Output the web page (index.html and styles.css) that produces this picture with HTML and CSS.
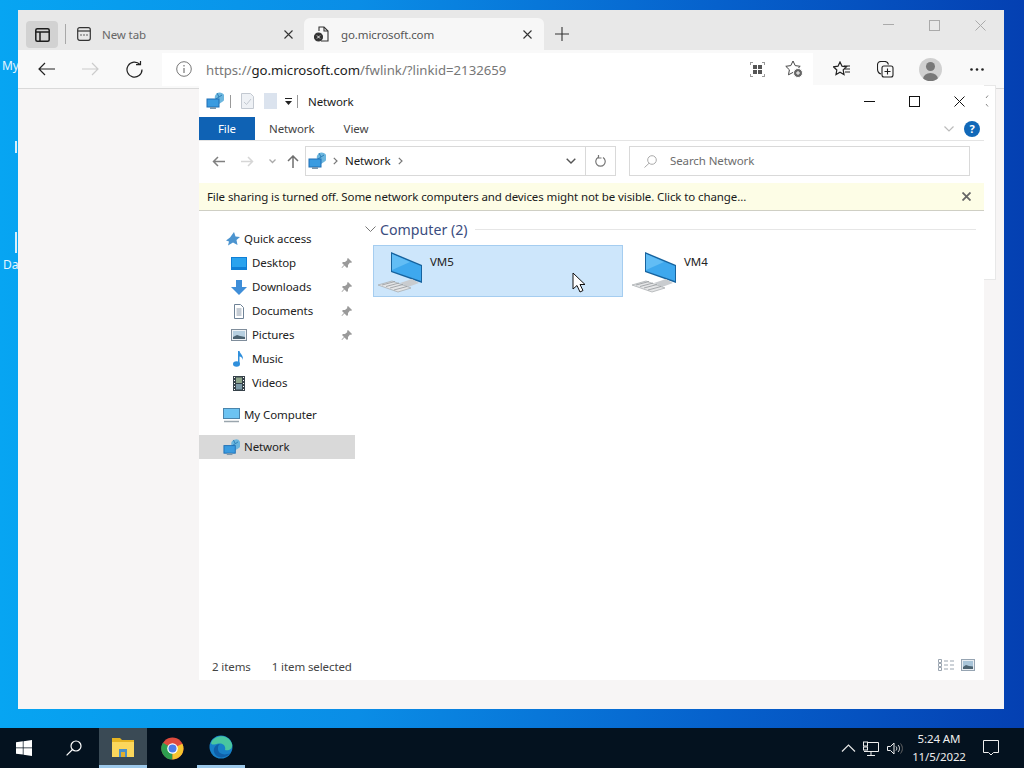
FILE: index.html
```html
<!DOCTYPE html>
<html lang="en">
<head>
    <meta charset="UTF-8">
    <title>Network</title>
    <link rel="stylesheet" href="styles.css">
</head>
<body>
    <svg class="defs" width="0" height="0">
        <symbol id="net" viewBox="0 0 18 18">
            <path d="M9 7a5 5 0 1 1 7 3l-3 2V7z" fill="#6cb6de"/>
            <path d="M11 1l2 4-3 2M16 3l-3 2" fill="none" stroke="#2c7fb8"/>
            <rect x="1" y="7" width="12" height="8" fill="#3a9be0" stroke="#1f6fb5"/>
            <rect x="4" y="15" width="6" height="2" fill="#7c97ad"/>
        </symbol>
        <symbol id="pc" viewBox="0 0 44 41">
            <path d="M13 0l31 13v18L13 20z" fill="#17639e"/>
            <path d="M14 2l29 12v15L14 19z" fill="#3ea8ee"/>
            <path d="M14 2l18 8-18 8z" fill="#62bdf5"/>
            <path d="M22 31l12-4 7 4-11 4z" fill="#c9cccf"/>
            <path d="M0 33l14-4 19 7-13 4z" fill="#e4e5e6" stroke="#a3a7ab" stroke-width=".7"/>
            <path d="M4 33l13-3.500M8 34.500l13-3.500M12 36l13-3.500M16 38l13-3.500" stroke="#94989c" stroke-width=".8"/>
        </symbol>
        <symbol id="pin" viewBox="0 0 12 12">
            <path d="M7 1l4 4-1 1-1-.4L7 8v2L6 11 3.500 8.500 1 11l-.5-.5L3 8 1 6l1-1h2l2.400-2L6 2z" fill="#9a9a9a"/>
        </symbol>
    </svg>

    <div class="desk-label label-my">My</div>
    <div class="desk-label label-mark mark-a"></div>
    <div class="desk-label label-mark mark-b"></div>
    <div class="desk-label label-da">Da</div>

    <!-- browser -->
    <div class="browser">
        <div class="tabstrip">
            <div class="tab-actions">
                <svg width="15" height="14" viewBox="0 0 15 14" fill="none" stroke="#1c1c1c" stroke-width="1.500"><rect x=".8" y=".8" width="13.400" height="12.400" rx="1.500"/><path d="M.8 4h13.400M5 4v9" /></svg>
            </div>
            <div class="tab-sep"></div>
            <div class="tab">
                <svg width="14" height="14" viewBox="0 0 14 14" fill="none" stroke="#333" stroke-width="1.200"><rect x=".7" y=".7" width="12.600" height="12.600" rx="2"/><path d="M.7 4h12.600"/><path d="M3.500 8h1M6.500 8h1M9.500 8h1" stroke-width="1.500"/></svg>
                <span class="tab-title">New tab</span>
                <svg class="tab-x" width="9" height="9" viewBox="0 0 9 9" stroke="#333" stroke-width="1.100"><path d="M.5.500l8 8M8.500.500l-8 8"/></svg>
            </div>
            <div class="tab tab-on">
                <svg width="15" height="16" viewBox="0 0 15 16" fill="none" stroke="#333" stroke-width="1.100"><path d="M5 5V1h5l4 4v10H7"/><path d="M10 1v4h4"/><circle cx="4.500" cy="11" r="4" fill="#333"/><path d="M3 9.500l3 3M6 9.500l-3 3" stroke="#fff" stroke-width=".9"/></svg>
                <span class="tab-title">go.microsoft.com</span>
                <svg class="tab-x" width="9" height="9" viewBox="0 0 9 9" stroke="#333" stroke-width="1.100"><path d="M.5.500l8 8M8.500.500l-8 8"/></svg>
            </div>
            <svg class="tab-new" width="14" height="14" viewBox="0 0 14 14" stroke="#333" stroke-width="1.100"><path d="M7 0v14M0 7h14"/></svg>
            <div class="win-btns">
                <svg width="11" height="11" viewBox="0 0 11 11" stroke="#aaa"><path d="M0 4.500h11"/></svg>
                <svg width="11" height="11" viewBox="0 0 11 11" fill="none" stroke="#aaa"><rect x=".5" y=".5" width="10" height="10"/></svg>
                <svg width="11" height="11" viewBox="0 0 11 11" stroke="#aaa"><path d="M.5.500l10 10M10.500.500l-10 10"/></svg>
            </div>
        </div>
        <div class="toolbar">
            <svg class="tb-back" width="17" height="14" viewBox="0 0 17 14" fill="none" stroke="#222" stroke-width="1.200"><path d="M17 7H1M7 1L1 7l6 6"/></svg>
            <svg class="tb-fwd" width="17" height="14" viewBox="0 0 17 14" fill="none" stroke="#ccc" stroke-width="1.200"><path d="M0 7h16M10 1l6 6-6 6"/></svg>
            <svg class="tb-reload" width="17" height="17" viewBox="0 0 17 17" fill="none" stroke="#222" stroke-width="1.200"><path d="M14 3.500A7.500 7.500 0 1 0 16 8.500"/><path d="M10 3.700h4.500V0"/></svg>
            <div class="urlbar">
                <svg width="16" height="16" viewBox="0 0 16 16" fill="none" stroke="#777"><circle cx="8" cy="8" r="7.300"/><path d="M8 7v5M8 4v1.500" stroke-width="1.200"/></svg>
                <span class="url"><span class="url-dim">https://</span>go.microsoft.com<span class="url-dim">/fwlink/?linkid=2132659</span></span>
                <svg class="url-grid" width="15" height="15" viewBox="0 0 15 15" fill="#555"><path d="M0 0h3v1H1v2H0zM12 0h3v3h-1V1h-2zM0 12h1v2h2v1H0zM14 12h1v3h-3v-1h2z" fill="#999"/><rect x="3" y="3" width="4" height="4"/><rect x="8" y="3" width="4" height="4"/><rect x="3" y="8" width="4" height="4"/><rect x="8" y="8" width="4" height="4"/></svg>
                <svg class="url-star" width="18" height="18" viewBox="0 0 18 18" fill="none" stroke="#444"><path d="M8 1l2.200 4.600 5 .7-3.600 3.500.9 5-4.500-2.400-4.500 2.400.9-5L.8 6.300l5-.7z"/><circle cx="13" cy="13" r="4.500" fill="#666" stroke="#fff"/><path d="M13 11v4M11 13h4" stroke="#fff"/></svg>
            </div>
            <svg class="tb-fav" width="17" height="16" viewBox="0 0 17 16" fill="none" stroke="#222" stroke-width="1.200"><path d="M7 1l2 4.200 4.500.6-3.300 3.200.8 4.500-4-2.200-4 2.200.8-4.500L.5 5.800 5 5.200z"/><path d="M11 5h6M12 8h5M12 11h5"/></svg>
            <svg class="tb-coll" width="17" height="17" viewBox="0 0 17 17" fill="none" stroke="#222" stroke-width="1.100"><path d="M4 13C1 12 .5 10 .5 8V4C.5 2 2 .5 4 .5h4c2 0 3 1 3.500 3"/><rect x="5" y="5" width="11" height="11" rx="2"/><path d="M10.500 7.500v6M7.500 10.500h6"/></svg>
            <div class="avatar"><div class="avatar-head"></div><div class="avatar-body"></div></div>
            <svg class="tb-more" width="14" height="3" viewBox="0 0 14 3" fill="#222"><circle cx="1.500" cy="1.500" r="1.300"/><circle cx="7" cy="1.500" r="1.300"/><circle cx="12.500" cy="1.500" r="1.300"/></svg>
        </div>
        <div class="browser-body"></div>
    </div>

    <!-- window sitting behind explorer -->
    <div class="back-window">
        <svg class="back-mark" width="4" height="12" viewBox="0 0 4 12" fill="none" stroke="#888"><path d="M3 .5L1 3M1 9l2 2.500"/></svg>
    </div>

    <!-- explorer -->
    <div class="explorer">
        <div class="titlebar">
            <svg class="qa-net" width="18" height="18"><use href="#net"/></svg>
            <div class="qa-sep"></div>
            <svg width="13" height="16" viewBox="0 0 13 16" fill="#eef1f5" stroke="#c3c9d1"><path d="M.5.500h9l3 3v12H.5z"/><path d="M3 9l2.500 2.500L10 6" fill="none"/></svg>
            <svg class="qa-doc" width="13" height="16" viewBox="0 0 13 16"><rect width="13" height="16" fill="#dbe3ee"/></svg>
            <svg class="qa-drop" width="7" height="7" viewBox="0 0 7 7" fill="#222"><path d="M0 0h7v1H0zM0 3h7L3.500 7z"/></svg>
            <div class="qa-sep qa-sep-b"></div>
            <span class="title-text">Network</span>
            <div class="ex-btns">
                <svg width="11" height="11" viewBox="0 0 11 11" stroke="#111"><path d="M0 5.500h11"/></svg>
                <svg width="11" height="11" viewBox="0 0 11 11" fill="none" stroke="#111"><rect x=".5" y=".5" width="10" height="10"/></svg>
                <svg width="11" height="11" viewBox="0 0 11 11" stroke="#111"><path d="M.5.500l10 10M10.500.500l-10 10"/></svg>
            </div>
        </div>
        <div class="ribbon">
            <div class="rib-file">File</div>
            <div class="rib-tab">Network</div>
            <div class="rib-tab">View</div>
            <svg class="rib-chev" width="10" height="6" viewBox="0 0 10 6" fill="none" stroke="#bbb" stroke-width="1.200"><path d="M.5.500L5 5 9.500.5"/></svg>
            <div class="help">?</div>
        </div>
        <div class="navrow">
            <svg class="nav-back" width="13" height="11" viewBox="0 0 13 11" fill="none" stroke="#808080" stroke-width="1.500"><path d="M13 5.500H1.500M6 1L1.500 5.500 6 10"/></svg>
            <svg class="nav-fwd" width="13" height="11" viewBox="0 0 13 11" fill="none" stroke="#d6d6d6" stroke-width="1.500"><path d="M0 5.500h11.500M7 1l4.500 4.500L7 10"/></svg>
            <svg class="nav-drop" width="7" height="5" viewBox="0 0 7 5" fill="none" stroke="#aaa" stroke-width="1.300"><path d="M.5.500l3 3 3-3"/></svg>
            <svg class="nav-up" width="12" height="13" viewBox="0 0 12 13" fill="none" stroke="#6f6f6f" stroke-width="1.500"><path d="M6 13V1.500M1 6l5-5 5 5"/></svg>
            <div class="addr">
                <svg width="18" height="18"><use href="#net"/></svg>
                <svg class="crumb" width="5" height="8" viewBox="0 0 5 8" fill="none" stroke="#777" stroke-width="1.200"><path d="M.8.800L4 4 .8 7.200"/></svg>
                <span class="addr-text">Network</span>
                <svg class="crumb" width="5" height="8" viewBox="0 0 5 8" fill="none" stroke="#777" stroke-width="1.200"><path d="M.8.800L4 4 .8 7.200"/></svg>
                <svg class="addr-drop" width="10" height="6" viewBox="0 0 10 6" fill="none" stroke="#555" stroke-width="1.400"><path d="M.7.700L5 5 9.300.7"/></svg>
                <div class="addr-reload">
                    <svg width="11" height="12" viewBox="0 0 11 12" fill="none" stroke="#777" stroke-width="1.200"><path d="M3 2.500A4.700 4.700 0 1 0 8 2.500"/><path d="M3.500 0v3H6.500" /></svg>
                </div>
            </div>
            <div class="search">
                <svg width="13" height="13" viewBox="0 0 13 13" fill="none" stroke="#aaa"><circle cx="8" cy="5" r="4.300"/><path d="M5 8.300L.5 12.500"/></svg>
                <span>Search Network</span>
            </div>
        </div>
        <div class="infobar">
            <span>File sharing is turned off. Some network computers and devices might not be visible. Click to change...</span>
            <svg width="9" height="9" viewBox="0 0 9 9" stroke="#666" stroke-width="1.800"><path d="M.5.500l8 8M8.500.500l-8 8"/></svg>
        </div>
        <div class="main">
            <div class="sidebar">
                <div class="side-item side-top side-quick">
                    <svg width="14" height="14" viewBox="0 0 14 14" fill="#4c94cf"><path d="M8 0l1.500 4.500L14 5l-3.500 3 1 5L7 10.500 2 13.500l1-4-3-1 4-3z"/></svg>
                    <span>Quick access</span>
                </div>
                <div class="side-item side-sub">
                    <svg width="16" height="13" viewBox="0 0 16 13"><rect width="16" height="13" fill="#0f7fd6"/><rect x="1" y="1" width="14" height="9" fill="#2aa3ee"/></svg>
                    <span>Desktop</span>
                    <svg class="pin" width="12" height="12"><use href="#pin"/></svg>
                </div>
                <div class="side-item side-sub">
                    <svg width="16" height="15" viewBox="0 0 16 15" fill="#3f8ed8"><path d="M5 0h6v7h5l-8 8-8-8h5z"/></svg>
                    <span>Downloads</span>
                    <svg class="pin" width="12" height="12"><use href="#pin"/></svg>
                </div>
                <div class="side-item side-sub">
                    <svg width="16" height="15" viewBox="0 0 16 15" fill="#fff" stroke="#6e8296"><path d="M3.500.500h6l3 3v11h-9z"/><path d="M5.500 5h5M5.500 7h5M5.500 9h5M5.500 11h5" stroke-width=".8"/></svg>
                    <span>Documents</span>
                    <svg class="pin" width="12" height="12"><use href="#pin"/></svg>
                </div>
                <div class="side-item side-sub">
                    <svg width="16" height="12" viewBox="0 0 16 12"><rect x=".5" y=".5" width="15" height="11" fill="#eef2f5" stroke="#7f8d9b"/><rect x="2" y="2" width="12" height="8" fill="#b6cfe0"/><path d="M2 8l4-2 3 1 5 1v2H2z" fill="#4b6270"/></svg>
                    <span>Pictures</span>
                    <svg class="pin" width="12" height="12"><use href="#pin"/></svg>
                </div>
                <div class="side-item side-sub">
                    <svg width="16" height="16" viewBox="0 0 16 16" fill="#2f8fdc"><ellipse cx="5.500" cy="13" rx="3.500" ry="2.700"/><path d="M7 0h1.500c.5 3 4 4 3.500 9-.5-2-2-3.500-3.500-3.500V13H7z"/></svg>
                    <span>Music</span>
                </div>
                <div class="side-item side-sub">
                    <svg width="16" height="15" viewBox="0 0 16 15"><rect x="2" width="12" height="15" fill="#37424a"/><rect x="5" y="1.500" width="6" height="5.500" fill="#8fa68c"/><rect x="5" y="8" width="6" height="5.500" fill="#7d9aa8"/><path d="M3 1h1v1H3zM3 4h1v1H3zM3 7h1v1H3zM3 10h1v1H3zM3 13h1v1H3zM12 1h1v1h-1zM12 4h1v1h-1zM12 7h1v1h-1zM12 10h1v1h-1zM12 13h1v1h-1z" fill="#fff"/></svg>
                    <span>Videos</span>
                </div>
                <div class="side-item side-top side-gap">
                    <svg width="17" height="15" viewBox="0 0 17 15"><rect x=".5" y=".5" width="16" height="10" fill="#6cc3f2" stroke="#4a84ab"/><path d="M1 13.500h15" stroke="#9aa5ad" stroke-width="1.500"/></svg>
                    <span>My Computer</span>
                </div>
                <div class="side-item side-top side-net">
                    <svg width="17" height="17"><use href="#net"/></svg>
                    <span>Network</span>
                </div>
            </div>
            <div class="content">
                <div class="group-head">
                    <svg width="11" height="7" viewBox="0 0 11 7" fill="none" stroke="#777"><path d="M.5.500l5 5 5-5"/></svg>
                    <span>Computer (2)</span>
                    <div class="group-line"></div>
                </div>
                <div class="items">
                    <div class="item item-on">
                        <svg width="44" height="41"><use href="#pc"/></svg>
                        <span>VM5</span>
                        <svg class="cursor" width="14" height="21" viewBox="0 0 14 21"><path d="M1 1v16l4-3.500L8 20l3-1.500-3-6h5z" fill="#fff" stroke="#111"/></svg>
                    </div>
                    <div class="item">
                        <svg width="44" height="41"><use href="#pc"/></svg>
                        <span>VM4</span>
                    </div>
                </div>
            </div>
        </div>
        <div class="statusbar">
            <span>2 items</span>
            <span>1 item selected</span>
            <div class="st-views">
                <svg width="16" height="12" viewBox="0 0 16 12" fill="none" stroke="#9aa5b0"><path d="M.5.500h3v3h-3zM.5 4.500h3v3h-3zM.5 8.500h3v3h-3zM6 2h4M12 2h4M6 6h4M12 6h4M6 10h4M12 10h4"/></svg>
                <svg width="14" height="12" viewBox="0 0 14 12"><rect x=".5" y=".5" width="13" height="11" fill="#e8edf2" stroke="#96a4b2"/><rect x="2" y="2" width="10" height="8" fill="#a8c4d8"/><path d="M2 8l3-2 3 1 4 .5V10H2z" fill="#4b6270"/></svg>
            </div>
        </div>
    </div>

    <!-- taskbar -->
    <div class="taskbar">
        <div class="tb-start">
            <svg width="16" height="16" viewBox="0 0 16 16" fill="#fff"><path d="M0 2.300l6.800-1V7.500H0zM7.500 1.200L16 0v7.500H7.500zM0 8.300h6.800v6.300L0 13.700zM7.500 8.300H16V16l-8.500-1.200z"/></svg>
        </div>
        <div class="tb-search">
            <svg width="16" height="16" viewBox="0 0 16 16" fill="none" stroke="#fff" stroke-width="1.200"><circle cx="10" cy="6" r="5"/><path d="M6.500 9.500L.6 15.400"/></svg>
        </div>
        <div class="tb-app tb-app-on">
            <svg width="24" height="20" viewBox="0 0 24 20"><path d="M1 1h8l2 2h12v4H1z" fill="#e6b422"/><rect x="1" y="5" width="22" height="15" fill="#fbd75c"/><rect x="8" y="12" width="8" height="8" fill="#4a90c8"/><rect x="10" y="15" width="4" height="5" fill="#e0b030"/></svg>
        </div>
        <div class="tb-app">
            <svg width="23" height="23" viewBox="0 0 24 24"><circle cx="12" cy="12" r="11.500" fill="#dd4b3e"/><path d="M12 12L2 6A11.500 11.500 0 0 0 12 23.500z" fill="#2e9e4f"/><path d="M12 12l10.300-5A11.500 11.500 0 0 1 12 23.500z" fill="#f7c52e"/><circle cx="12" cy="12" r="5.500" fill="#fff"/><circle cx="12" cy="12" r="4.200" fill="#4a7de8"/></svg>
        </div>
        <div class="tb-app tb-app-open">
            <svg width="24" height="24" viewBox="0 0 24 24"><circle cx="12" cy="12" r="11.500" fill="#1780c8"/><path d="M2 8C5 0 19-2 23 9c1 5-3 7-7 6 1-3-1-7-6-6.500C6 9 3 11 2 8z" fill="#49c6a0"/><path d="M9 14c0 5 7 7 12 4-4 6-14 6-16-1-1-4 2-8 6-8-2 1-2 3-2 5z" fill="#0f5fa8"/></svg>
        </div>
        <div class="tray">
            <svg width="15" height="8" viewBox="0 0 15 8" fill="none" stroke="#e6e6e6" stroke-width="1.200"><path d="M1 7.500l6.500-6.500L14 7.500"/></svg>
            <svg class="tray-net" width="16" height="15" viewBox="0 0 16 15" fill="none" stroke="#eee"><path d="M3 1.500h12.500v9H1M8 11v3M4 14.500h8"/><rect x=".5" y="1" width="4" height="4" fill="#04121f"/><rect x=".5" y="6" width="4" height="3" fill="#04121f"/></svg>
            <svg class="tray-vol" width="17" height="13" viewBox="0 0 17 13" fill="none" stroke="#eee"><path d="M.5 4.500h3L7 1v11L3.500 8.500h-3z"/><path d="M9 4.500c1 1 1 3 0 4M11 3c2 2 2 5 0 7"/><path d="M13.500 1.500c2.500 3 2.500 7 0 10" stroke="#666"/></svg>
            <div class="clock"><div>5:24 AM</div><div>11/5/2022</div></div>
            <svg class="tray-note" width="16" height="16" viewBox="0 0 16 16" fill="none" stroke="#eee"><path d="M.5.500h15v12h-5L8 15l-2.500-2.500h-5z"/></svg>
        </div>
    </div>
</body>
</html>
```

FILE: styles.css
```css
* {
    margin: 0;
    padding: 0;
    box-sizing: border-box;
}

html, body {
    width: 1024px;
    height: 768px;
    overflow: hidden;
}

body {
    position: relative;
    font-family: "Noto Sans", "Liberation Sans", sans-serif;
    font-size: 11.5px;
    letter-spacing: -0.1px;
    color: #222;
    background: linear-gradient(90deg, #07a5f2 0%, #0a8de6 35%, #0661cc 70%, #0440b2 100%);
}

svg {
    display: block;
    flex: none;
}

.defs {
    position: absolute;
}

/* desktop leftovers */
.desk-label {
    position: absolute;
    color: #e8f6ff;
    font-size: 12px;
}

.label-my { left: 2px; top: 57px; }
.label-da { left: 3px; top: 256px; }

.label-mark {
    left: 15px;
    width: 2px;
    height: 12px;
    background: #d8effc;
}

.mark-a { top: 141px; }
.mark-b { top: 232px; height: 21px; }

/* browser */
.browser {
    position: absolute;
    left: 18px;
    top: 10px;
    width: 986px;
    height: 699px;
    display: flex;
    flex-direction: column;
    background: #f7f5f5;
}

.tabstrip {
    height: 40px;
    display: flex;
    align-items: flex-end;
    background: #e8e8e8;
    padding-left: 8px;
}

.tab-actions {
    width: 32px;
    height: 27px;
    margin-bottom: 2px;
    background: #d2d2d2;
    border-radius: 4px;
    display: flex;
    align-items: center;
    justify-content: center;
}

.tab-sep {
    width: 1px;
    height: 20px;
    background: #a8a8a8;
    margin: 0 11px 6px 7px;
}

.tab {
    width: 227px;
    height: 32px;
    display: flex;
    align-items: center;
    gap: 11px;
    color: #666;
}

.tab-title {
    flex: 1;
}

.tab-x {
    margin-right: 11px;
}

.tab-on {
    width: 240px;
    padding-left: 10px;
    gap: 12px;
    background: #f7f7f7;
    border-radius: 6px 6px 0 0;
    color: #555;
}

.tab-on .tab-x {
    margin-right: 12px;
}

.tab-new {
    margin: 0 0 9px 11px;
}

.win-btns {
    margin-left: auto;
    align-self: flex-start;
    display: flex;
    gap: 35px;
    padding: 10px 18px 0 0;
}

.toolbar {
    height: 39px;
    display: flex;
    align-items: center;
    background: #f9f9f9;
    border-bottom: 1px solid #d9d9d9;
    padding-left: 20px;
}

.tb-fwd,
.tb-reload {
    margin-left: 27px;
}

.urlbar {
    width: 651px;
    height: 33px;
    margin-left: 19px;
    display: flex;
    align-items: center;
    gap: 14px;
    padding: 0 10px 0 14px;
    background: #fff;
}

.url {
    padding-top: 2px;
    font-size: 13.2px;
    letter-spacing: 0;
    color: #222;
    white-space: nowrap;
}

.url-dim {
    color: #777;
}

.url-grid {
    margin-left: auto;
}

.url-star {
    margin-left: 6px;
}

.tb-fav { margin-left: 20px; }
.tb-coll { margin-left: 27px; }

.avatar {
    width: 23px;
    height: 23px;
    border-radius: 50%;
    margin-left: 25px;
    background: #d0d0d0;
    position: relative;
    overflow: hidden;
}

.avatar-head {
    position: absolute;
    left: 7px;
    top: 4px;
    width: 9px;
    height: 9px;
    border-radius: 50%;
    background: #787878;
}

.avatar-body {
    position: absolute;
    left: 4px;
    top: 15px;
    width: 15px;
    height: 12px;
    border-radius: 50%;
    background: #787878;
}

.tb-more { margin-left: 28px; }

.browser-body {
    flex: 1;
}

.back-window {
    position: absolute;
    left: 360px;
    top: 85px;
    width: 636px;
    height: 195px;
    background: #fff;
    border: 1px solid #e8e8e8;
}

.back-mark {
    position: absolute;
    left: 624px;
    top: 9px;
}

/* explorer */
.explorer {
    position: absolute;
    left: 199px;
    top: 85px;
    width: 785px;
    height: 595px;
    display: flex;
    flex-direction: column;
    background: #fff;
}

.titlebar {
    height: 32px;
    display: flex;
    align-items: center;
    padding-left: 7px;
}

.qa-sep {
    width: 1px;
    height: 13px;
    background: #999;
    margin: 0 10px 0 6px;
}

.qa-doc { margin-left: 10px; }
.qa-drop { margin-left: 8px; }
.qa-sep-b { margin: 0 10px 0 5px; }

.title-text {
    color: #1a1a1a;
}

.ex-btns {
    margin-left: auto;
    display: flex;
    gap: 34px;
    padding-right: 19px;
}

.ribbon {
    height: 24px;
    display: flex;
    align-items: center;
    border-bottom: 1px solid #e4e4e4;
    padding-right: 4px;
}

.rib-file {
    width: 56px;
    height: 23px;
    line-height: 23px;
    text-align: center;
    color: #fff;
    background: #0f62b4;
}

.rib-tab {
    padding: 0 14px;
    color: #444;
}

.rib-tab + .rib-tab {
    padding-left: 15px;
}

.rib-chev {
    margin-left: auto;
    margin-right: 10px;
}

.help {
    width: 16px;
    height: 16px;
    border-radius: 50%;
    background: #1168b8;
    color: #fff;
    font-size: 11px;
    font-weight: bold;
    line-height: 16px;
    text-align: center;
}

.navrow {
    height: 40px;
    display: flex;
    align-items: center;
    padding-left: 13px;
}

.nav-fwd { margin-left: 16px; }
.nav-drop { margin-left: 15px; }
.nav-up { margin-left: 11px; }

.addr {
    width: 311px;
    height: 30px;
    margin-left: 6px;
    display: flex;
    align-items: center;
    border: 1px solid #d9d9d9;
    padding-left: 2px;
}

.addr .crumb {
    margin-left: 7px;
}

.addr-text {
    margin: -2px 0 0 7px;
    color: #1a1a1a;
}

.addr .addr-drop {
    margin-left: auto;
    margin-right: 9px;
}

.addr-reload {
    width: 30px;
    height: 100%;
    border-left: 1px solid #d9d9d9;
    display: flex;
    align-items: center;
    justify-content: center;
}

.search {
    width: 341px;
    height: 30px;
    margin-left: 13px;
    display: flex;
    align-items: center;
    gap: 13px;
    padding-left: 14px;
    border: 1px solid #d9d9d9;
    color: #6d6d6d;
}

.search span {
    margin-top: -2px;
}

.infobar {
    height: 28px;
    margin-top: 2px;
    display: flex;
    align-items: center;
    justify-content: space-between;
    padding: 0 13px 0 8px;
    background: #fdfde6;
    border-bottom: 1px solid #cfcfc4;
    color: #1a1a1a;
}

.main {
    flex: 1;
    display: flex;
}

.sidebar {
    width: 156px;
    padding-top: 16px;
}

.side-item {
    height: 24px;
    display: flex;
    align-items: center;
    color: #222;
}

.side-item span {
    margin-top: -2px;
}

.side-top {
    padding-left: 24px;
    gap: 4px;
}

.side-quick {
    padding-left: 27px;
}

.side-sub {
    padding-left: 32px;
    gap: 5px;
}

.side-sub .pin {
    margin-left: auto;
    margin-right: 2px;
}

.side-gap {
    margin-top: 8px;
}

.side-net {
    margin-top: 8px;
    background: #d9d9d9;
}

.content {
    flex: 1;
    padding: 8px 8px 0 10px;
}

.group-head {
    height: 20px;
    display: flex;
    align-items: center;
    gap: 4px;
    font-size: 14.2px;
    letter-spacing: 0;
    color: #3b4d80;
}

.group-line {
    flex: 1;
    height: 1px;
    background: #e6e6e6;
    margin-left: 3px;
}

.items {
    display: flex;
    gap: 4px;
    margin-top: 6px;
    margin-left: 8px;
}

.item {
    position: relative;
    width: 250px;
    height: 52px;
    display: flex;
    align-items: flex-start;
    gap: 8px;
    padding: 6px 0 0 4px;
    border: 1px solid transparent;
}

.item span {
    margin-top: 2px;
    line-height: 16px;
}

.item-on {
    background: #cde6fb;
    border-color: #a5cdf0;
}

.cursor {
    position: absolute;
    left: 198px;
    top: 26px;
}

.statusbar {
    height: 27px;
    display: flex;
    align-items: center;
    padding: 0 9px 0 13px;
    color: #444;
    gap: 21px;
}

.st-views {
    margin-left: auto;
    padding-bottom: 4px;
    display: flex;
    gap: 7px;
}

/* taskbar */
.taskbar {
    position: absolute;
    left: 0;
    top: 728px;
    width: 1024px;
    height: 40px;
    display: flex;
    align-items: center;
    background: #04121f;
    color: #eee;
}

.tb-start {
    width: 48px;
    display: flex;
    justify-content: center;
}

.tb-search {
    width: 51px;
    display: flex;
    justify-content: center;
}

.tb-app {
    width: 48px;
    height: 40px;
    margin-right: 1px;
    display: flex;
    align-items: center;
    justify-content: center;
}

.tb-app-on {
    background: #3a4a55;
    border-bottom: 3px solid #9cc8ea;
}

.tb-app-open {
    border-bottom: 3px solid #9cc8ea;
}

.tray {
    margin-left: auto;
    display: flex;
    align-items: center;
    padding-right: 25px;
}

.tray-net { margin-left: 7px; }
.tray-vol { margin-left: 8px; }

.clock {
    width: 54px;
    margin-left: 8px;
    text-align: center;
    line-height: 18px;
    white-space: nowrap;
    color: #eee;
}

.tray-note {
    margin-left: 17px;
}
```
